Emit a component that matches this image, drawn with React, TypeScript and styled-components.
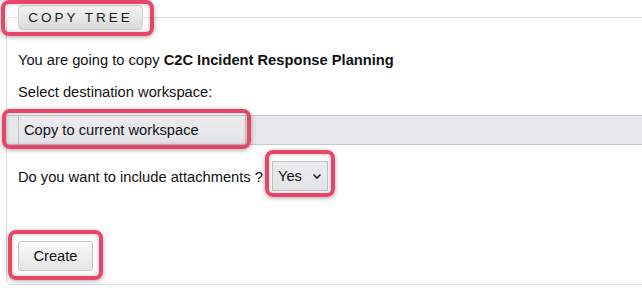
import styled, { createGlobalStyle } from "styled-components";

const GlobalStyle = createGlobalStyle`
  html, body {
    margin: 0;
    padding: 0;
    background: #ffffff;
    overflow: hidden;
  }
  body {
    font-family: "Liberation Sans", Arial, sans-serif;
    font-size: 14.7px;
    color: #111;
  }
`;

const Frame = styled.fieldset`
  margin: 5px -20px 0 6px;
  padding: 0 0 13px 11px;
  border: 1px solid #dedede;
  border-radius: 6px;
  min-width: 0;
`;

const Legend = styled.legend`
  padding: 0;
  margin: 0;
`;

// red annotation box drawn over a control
const Mark = styled.span<{ $i: [number, number, number, number] }>`
  position: relative;
  display: inline-block;
  vertical-align: middle;

  &::after {
    content: "";
    position: absolute;
    top: -${(p) => p.$i[0]}px;
    right: -${(p) => p.$i[1]}px;
    bottom: -${(p) => p.$i[2]}px;
    left: -${(p) => p.$i[3]}px;
    border: 4px solid #e8456b;
    border-radius: 8px;
    box-shadow: 0 1px 5px rgba(0, 0, 0, 0.35), inset 0 0 4px rgba(0, 0, 0, 0.25);
    pointer-events: none;
  }
`;

const LegendButton = styled.div`
  box-sizing: border-box;
  width: 125px;
  height: 25px;
  display: flex;
  align-items: center;
  justify-content: center;
  border: 1px solid #d2d2d2;
  border-radius: 4px;
  background: linear-gradient(#f4f4f4, #dadada);
  font-size: 13.5px;
  letter-spacing: 3px;
  color: #1a1a1a;
`;

const Line = styled.div<{ $top: number }>`
  margin-top: ${(p) => p.$top}px;
  line-height: 20px;
`;

const Bar = styled.div`
  box-sizing: border-box;
  margin: 13px 0 0 -11px;
  padding-left: 11px;
  height: 30px;
  background: #e7e7eb;
  border-top: 1px solid #c8c8c8;
  border-bottom: 1px solid #c8c8c8;
  display: flex;
  align-items: flex-start;
`;

const Select = styled.div<{ $w: number }>`
  box-sizing: border-box;
  width: ${(p) => p.$w}px;
  height: 30px;
  margin-top: -1px;
  padding: 0 5px;
  display: flex;
  align-items: center;
  justify-content: space-between;
  border: 1px solid #c4c4c4;
  background: linear-gradient(#ececef, #e4e4e8);
  color: #111;
`;

const Row = styled.div`
  margin-top: 17px;
  display: flex;
  align-items: center;
  gap: 9px;
`;

const Actions = styled.div`
  margin-top: 50px;
`;

const Button = styled.div`
  box-sizing: border-box;
  width: 75px;
  height: 30px;
  display: flex;
  align-items: center;
  justify-content: center;
  border: 1px solid #c6c6c6;
  border-radius: 3px;
  background: linear-gradient(#fbfbfb, #e4e4e4);
  color: #111;
`;

const Chevron = () => (
  <svg width="10" height="7" viewBox="0 0 10 7">
    <path d="M1.5 1.5l3.5 3.5 3.5-3.5" fill="none" stroke="#222" strokeWidth="1.6" />
  </svg>
);

export default function App() {
  return (
    <>
      <GlobalStyle />
      <Frame>
        <Legend>
          <Mark $i={[5, 11, 6, 17]}>
            <LegendButton>COPY TREE</LegendButton>
          </Mark>
        </Legend>

        <Line $top={20}>
          You are going to copy <b>C2C Incident Response Planning</b>
        </Line>
        <Line $top={12}>Select destination workspace:</Line>

        <Bar>
          <Mark $i={[7, 5, 4, 16]}>
            <Select $w={228}>Copy to current workspace</Select>
          </Mark>
        </Bar>

        <Row>
          <span>Do you want to include attachments ?</span>
          <Mark $i={[12, 7, 6, 7]}>
            <Select $w={56}>
              Yes
              <Chevron />
            </Select>
          </Mark>
        </Row>

        <Actions>
          <Mark $i={[11, 10, 9, 10]}>
            <Button>Create</Button>
          </Mark>
        </Actions>
      </Frame>
    </>
  );
}
